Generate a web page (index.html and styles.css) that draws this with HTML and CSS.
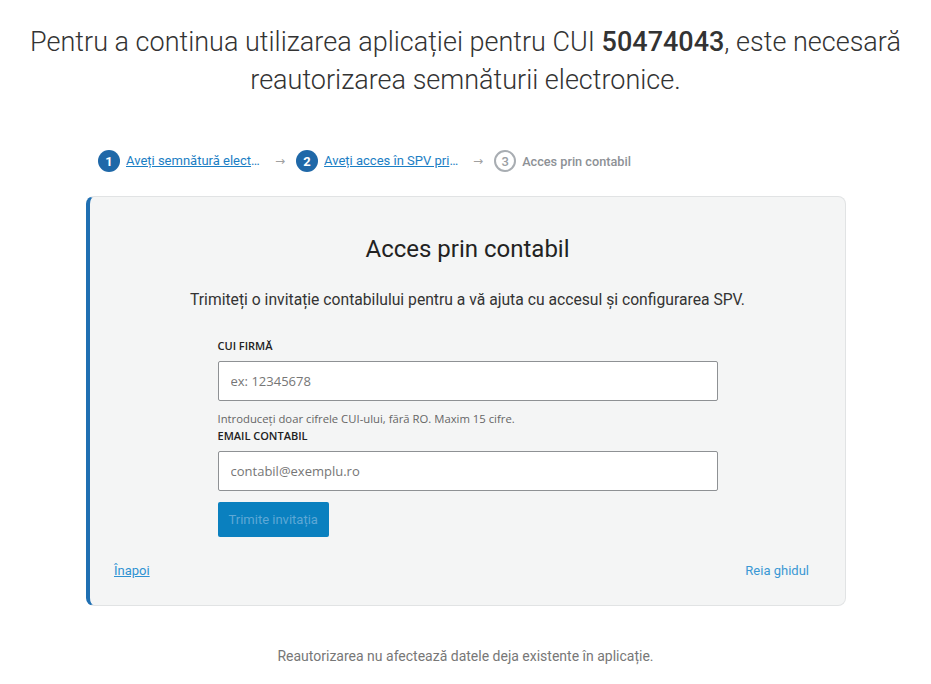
FILE: index.html
```html
<!DOCTYPE html>
<html lang="ro">
<head>
<meta charset="utf-8">
<title>Reautorizare</title>
<link rel="stylesheet" href="styles.css">
</head>
<body>
<main class="page">
  <h1 class="headline">Pentru a continua utilizarea aplicației pentru CUI <strong>50474043</strong>, este necesară reautorizarea semnăturii electronice.</h1>

  <div class="wrap">
    <nav class="steps">
      <div class="step done">
        <span class="num">1</span>
        <a href="#" class="step-link">Aveți semnătură electronică?</a>
      </div>
      <span class="arrow">→</span>
      <div class="step done">
        <span class="num">2</span>
        <a href="#" class="step-link">Aveți acces în SPV prin ANAF?</a>
      </div>
      <span class="arrow">→</span>
      <div class="step current">
        <span class="num">3</span>
        <span class="step-label">Acces prin contabil</span>
      </div>
    </nav>

    <section class="card">
      <h2 class="card-title">Acces prin contabil</h2>
      <p class="card-sub">Trimiteți o invitație contabilului pentru a vă ajuta cu accesul și configurarea SPV.</p>

      <form class="form">
        <label class="label" for="cui">CUI FIRMĂ</label>
        <input class="input" id="cui" type="text" placeholder="ex: 12345678">
        <p class="hint">Introduceți doar cifrele CUI-ului, fără RO. Maxim 15 cifre.</p>
        <label class="label" for="email">EMAIL CONTABIL</label>
        <input class="input" id="email" type="email" placeholder="contabil@exemplu.ro">
        <button type="button" class="btn" disabled>Trimite invitația</button>
      </form>

      <div class="card-foot">
        <a href="#" class="back">Înapoi</a>
        <a href="#" class="restart">Reia ghidul</a>
      </div>
    </section>
  </div>

  <p class="note">Reautorizarea nu afectează datele deja existente în aplicație.</p>
</main>
</body>
</html>
```

FILE: styles.css
```css
* { box-sizing: border-box; }

html, body {
  margin: 0;
  padding: 0;
  background: #ffffff;
}

body {
  font-family: Roboto, "Liberation Sans", sans-serif;
  color: #333333;
}

.page {
  display: flex;
  flex-direction: column;
  align-items: center;
  padding-top: 23px;
}

.headline {
  margin: 0;
  font-size: 27px;
  line-height: 38px;
  font-weight: 300;
  text-align: center;
  color: #333;
  width: 910px;
}

.headline strong {
  font-weight: 500;
}

.wrap {
  width: 760px;
  margin-top: 50px;
  margin-left: 1px;
}

.steps {
  display: flex;
  align-items: center;
  gap: 9px;
  padding-left: 12px;
  height: 24px;
  font-size: 13px;
}

.step {
  display: flex;
  align-items: center;
  gap: 6px;
}

.num {
  width: 22px;
  height: 22px;
  border-radius: 50%;
  display: flex;
  align-items: center;
  justify-content: center;
  font-size: 13px;
  font-weight: 700;
  flex: none;
}

.done .num {
  background: #1f68a8;
  color: #fff;
}

.current .num {
  border: 2px solid #a8adb2;
  color: #9a9ea3;
  font-weight: 500;
}

.step-link {
  color: #1b7ec4;
  text-decoration: underline;
  max-width: 138px;
  white-space: nowrap;
  overflow: hidden;
  text-overflow: ellipsis;
  line-height: 18px;
}

.step-label {
  color: #8d9196;
  font-weight: 500;
  font-size: 12.7px;
}

.arrow {
  color: #a0a0a0;
  font-family: "DejaVu Sans", sans-serif;
  font-size: 12px;
  line-height: 16px;
  padding: 0 2px;
}

.card {
  margin-top: 23px;
  background: #f4f5f5;
  border: 1px solid #e1e3e4;
  border-left: 4px solid #1f6fb2;
  border-radius: 8px;
  padding: 38px 24px 26px 24px;
  display: flex;
  flex-direction: column;
  align-items: center;
  height: 410px;
}

.card-title {
  margin: 0;
  font-size: 24px;
  line-height: 29px;
  font-weight: 400;
  color: #222;
}

.card-sub {
  margin: 25px 0 0;
  font-size: 15.7px;
  line-height: 22px;
  color: #333;
}

.form {
  width: 500px;
  margin-top: 28px;
  display: flex;
  flex-direction: column;
  align-items: flex-start;
  font-family: "Open Sans", "Liberation Sans", sans-serif;
}

.label {
  font-size: 11px;
  line-height: 14px;
  font-weight: 600;
  color: #222;
}

.input {
  margin-top: 8px;
  width: 100%;
  height: 40px;
  border: 1px solid #8e9194;
  border-radius: 2px;
  background: #fff;
  padding: 0 12px;
  font-family: "Open Sans", "Liberation Sans", sans-serif;
  font-size: 13px;
  color: #333;
}

.input::placeholder {
  color: #767676;
}

.hint {
  margin: 11px 0 3px;
  font-size: 11.3px;
  line-height: 14px;
  color: #666;
}

.btn {
  margin-top: 11px;
  height: 35px;
  padding: 0 11px;
  white-space: nowrap;
  border: none;
  border-radius: 2px;
  background: #0a80bf;
  color: #5ea8d6;
  font-family: Roboto, "Liberation Sans", sans-serif;
  font-size: 13px;
}

.card-foot {
  margin-top: auto;
  align-self: stretch;
  display: flex;
  justify-content: space-between;
  padding-right: 12px;
  font-size: 13px;
  line-height: 16px;
}

.back {
  color: #2f92d2;
  text-decoration: underline;
}

.restart {
  color: #3a98d4;
  text-decoration: none;
}

.note {
  margin: 41px 0 0;
  font-size: 14px;
  line-height: 18px;
  color: #777;
}
```
